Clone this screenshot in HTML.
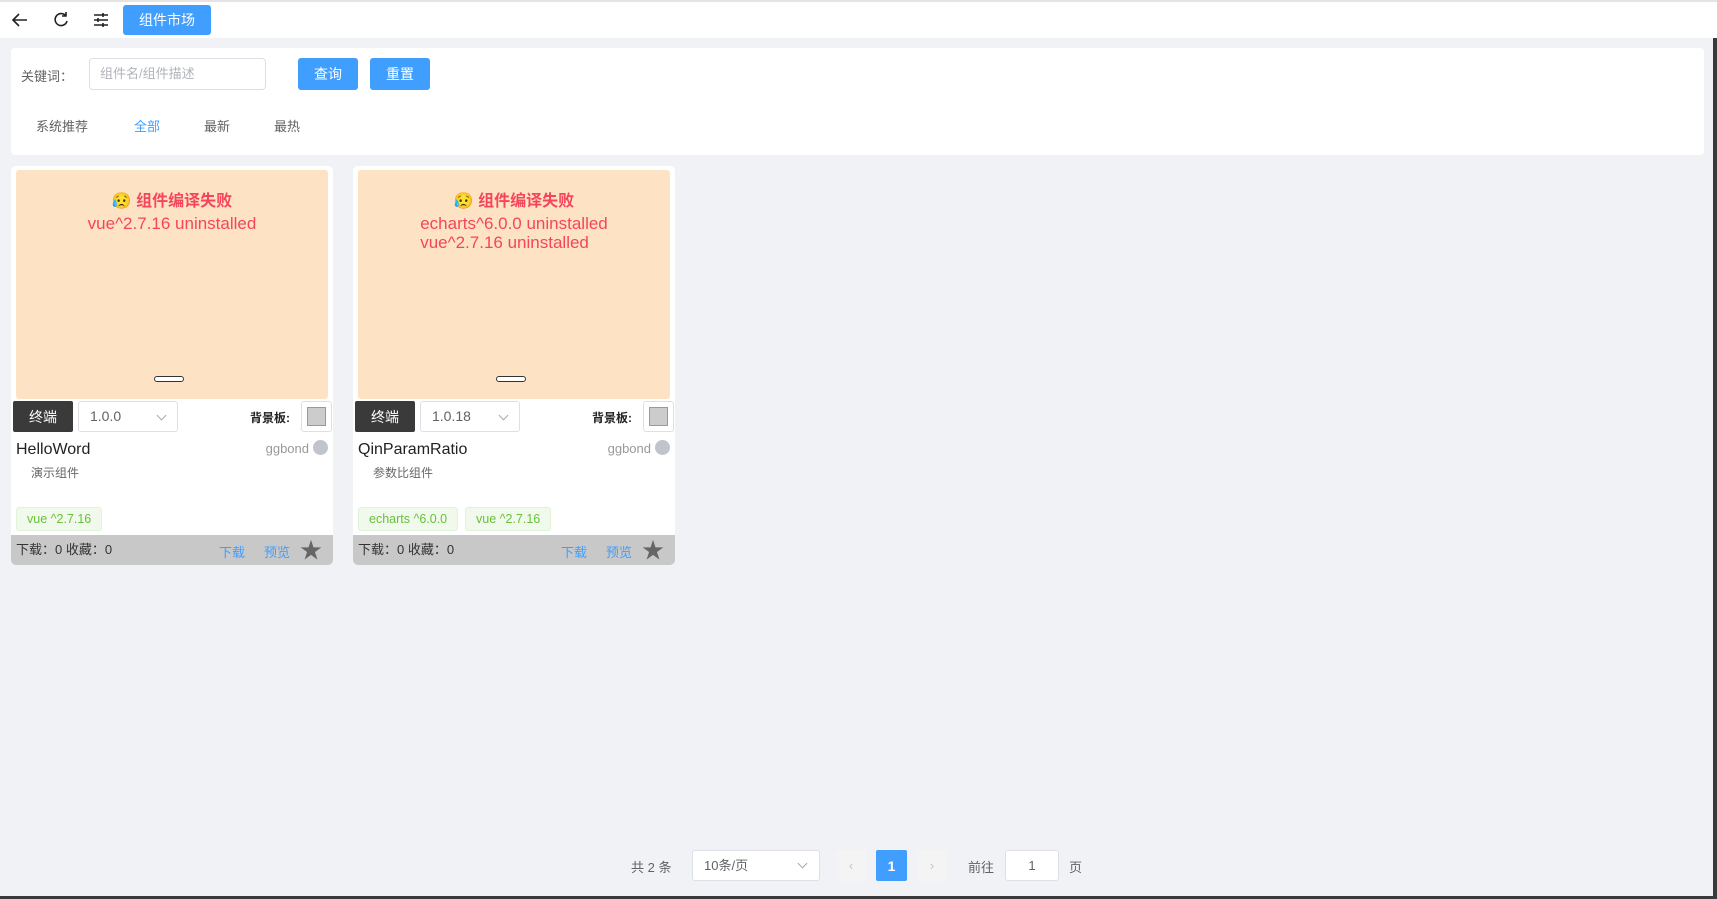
<!DOCTYPE html><html><head><meta charset="utf-8"><style>
*{box-sizing:border-box;margin:0;padding:0}
body{width:1717px;height:899px;background:#f0f2f5;font-family:"Liberation Sans","Noto Sans CJK SC",sans-serif;position:relative;overflow:hidden;color:#606266}
.a{position:absolute}
.top{left:0;top:0;width:1717px;height:38px;background:#fff;border-top:2px solid #e4e4e4}
.btn{background:#409eff;color:#fff;border-radius:3px;font-size:14px;display:flex;align-items:center;justify-content:center}
.panel{left:11px;top:48px;width:1693px;height:107px;background:#fff;border-radius:4px}
.card{width:322px;height:399px;background:#fff;border-radius:5px;top:166px}
.prev{left:5px;top:4px;width:312px;height:229px;background:#fde3c3;border-radius:3px;text-align:center;color:#f5455b;font-size:17px;line-height:19px;padding-top:22px}
.prev b{font-size:16px;display:block;margin-bottom:3px}
.prev span{display:inline-block;text-align:left}
.pill{left:143px;top:210px;width:30px;height:6px;border:1.5px solid #333;border-radius:4px;background:#fff}
.term{left:2px;top:235px;width:60px;height:31px;background:#3a3a3a;color:#fff;font-size:14px;border-radius:2px;display:flex;align-items:center;justify-content:center}
.sel{left:67px;top:235px;width:100px;height:31px;border:1px solid #dcdfe6;border-radius:3px;font-size:14px;padding-left:11px;line-height:29px;color:#606266}
.sel i{position:absolute;right:12px;top:10px;width:7px;height:7px;border-right:1px solid #aaa;border-bottom:1px solid #aaa;transform:rotate(45deg)}
.bgl{left:239px;top:243px;font-size:12px;color:#222;font-weight:bold}
.bgb{left:290px;top:235px;width:31px;height:31px;border:1px solid #dcdfe6;border-radius:3px;padding:5px}
.bgb div{width:100%;height:100%;background:#ccc;border:1px solid #999}
.name{left:5px;font-size:16px;color:#222;top:275px}
.auth{right:24px;top:275px;font-size:13px;color:#999}
.dot{right:5px;top:274px;width:15px;height:15px;border-radius:50%;background:#c0c4cc}
.desc{left:20px;top:298px;font-size:12px;color:#666}
.tag{top:341px;height:24px;background:#f0f9eb;border:1px solid #e1f3d8;color:#67c23a;font-size:12.5px;line-height:22px;padding:0 10px;border-radius:3px}
.foot{left:0;top:369px;width:322px;height:30px;background:#c8c8c8;border-radius:0 0 5px 5px;font-size:13px;color:#333;line-height:30px;padding-left:5px}
.lk{color:#409eff;font-size:13px;top:376px}
</style></head><body>
<div class="a top"></div>
<svg class="a" style="left:11px;top:11px" width="18" height="18" viewBox="0 0 18 18"><path d="M16 9H2M8 3L2 9l6 6" fill="none" stroke="#222" stroke-width="1.6"/></svg>
<svg class="a" style="left:52px;top:11px" width="18" height="18" viewBox="0 0 18 18"><path d="M14 5A6 6 0 1 0 15 10M14 1v4h-4" fill="none" stroke="#222" stroke-width="1.6"/></svg>
<svg class="a" style="left:92px;top:11px" width="18" height="18" viewBox="0 0 18 18"><path d="M2 4h14M2 9h14M2 14h14M11 2v4M6 7v4M11 12v4" fill="none" stroke="#222" stroke-width="1.6"/></svg>
<div class="a btn" style="left:123px;top:5px;width:88px;height:30px">组件市场</div>
<div class="a panel"></div>
<div class="a" style="left:21px;top:66px;font-size:13px">关键词：</div>
<div class="a" style="left:89px;top:58px;width:177px;height:32px;border:1px solid #dcdfe6;border-radius:4px;font-size:13px;color:#b0b3b8;padding-left:10px;line-height:30px">组件名/组件描述</div>
<div class="a btn" style="left:298px;top:58px;width:60px;height:32px">查询</div>
<div class="a btn" style="left:370px;top:58px;width:60px;height:32px">重置</div>
<div class="a" style="left:36px;top:116px;font-size:13px">系统推荐</div>
<div class="a" style="left:134px;top:116px;font-size:13px;color:#409eff">全部</div>
<div class="a" style="left:204px;top:116px;font-size:13px">最新</div>
<div class="a" style="left:274px;top:116px;font-size:13px">最热</div>

<div class="a card" style="left:11px">
<div class="a prev"><b>😥 组件编译失败</b><span>vue^2.7.16 uninstalled</span></div>
<div class="a pill"></div>
<div class="a term">终端</div><div class="a sel">1.0.0<i></i></div>
<div class="a bgl">背景板:</div><div class="a bgb"><div></div></div>
<div class="a name">HelloWord</div><div class="a auth">ggbond</div><div class="a dot"></div>
<div class="a desc">演示组件</div>
<div class="a tag" style="left:5px">vue ^2.7.16</div>
<div class="a foot">下载：0 收藏：0</div>
<div class="a lk" style="left:208px">下载</div><div class="a lk" style="left:253px">预览</div>
<div class="a" style="left:289px;top:367px;font-size:22px;color:#666">★</div>
</div>

<div class="a card" style="left:353px">
<div class="a prev"><b>😥 组件编译失败</b><span>echarts^6.0.0 uninstalled<br>vue^2.7.16 uninstalled</span></div>
<div class="a pill"></div>
<div class="a term">终端</div><div class="a sel">1.0.18<i></i></div>
<div class="a bgl">背景板:</div><div class="a bgb"><div></div></div>
<div class="a name">QinParamRatio</div><div class="a auth">ggbond</div><div class="a dot"></div>
<div class="a desc">参数比组件</div>
<div class="a tag" style="left:5px">echarts ^6.0.0</div>
<div class="a tag" style="left:112px">vue ^2.7.16</div>
<div class="a foot">下载：0 收藏：0</div>
<div class="a lk" style="left:208px">下载</div><div class="a lk" style="left:253px">预览</div>
<div class="a" style="left:289px;top:367px;font-size:22px;color:#666">★</div>
</div>

<div class="a" style="left:631px;top:857px;font-size:13px">共 2 条</div>
<div class="a" style="left:692px;top:850px;width:128px;height:31px;background:#fff;border:1px solid #dcdfe6;border-radius:3px;font-size:13px;line-height:29px;padding-left:11px">10条/页<span class="a" style="right:13px;top:9px;width:7px;height:7px;border-right:1px solid #aaa;border-bottom:1px solid #aaa;transform:rotate(45deg)"></span></div>
<div class="a" style="left:836px;top:850px;width:30px;height:31px;background:#f4f4f5;color:#c0c4cc;text-align:center;line-height:31px;font-size:13px">‹</div>
<div class="a btn" style="left:876px;top:850px;width:31px;height:31px;font-weight:bold;border-radius:2px">1</div>
<div class="a" style="left:917px;top:850px;width:30px;height:31px;background:#f4f4f5;color:#c0c4cc;text-align:center;line-height:31px;font-size:13px">›</div>
<div class="a" style="left:968px;top:857px;font-size:13px">前往</div>
<div class="a" style="left:1005px;top:850px;width:54px;height:31px;background:#fff;border:1px solid #dcdfe6;border-radius:3px;text-align:center;line-height:29px;font-size:13px">1</div>
<div class="a" style="left:1069px;top:857px;font-size:13px">页</div>
<div class="a" style="left:1713px;top:38px;width:4px;height:861px;background:#3a3a3a"></div>
<div class="a" style="left:0;top:896px;width:1717px;height:3px;background:#3a3a3a"></div>
</body></html>
